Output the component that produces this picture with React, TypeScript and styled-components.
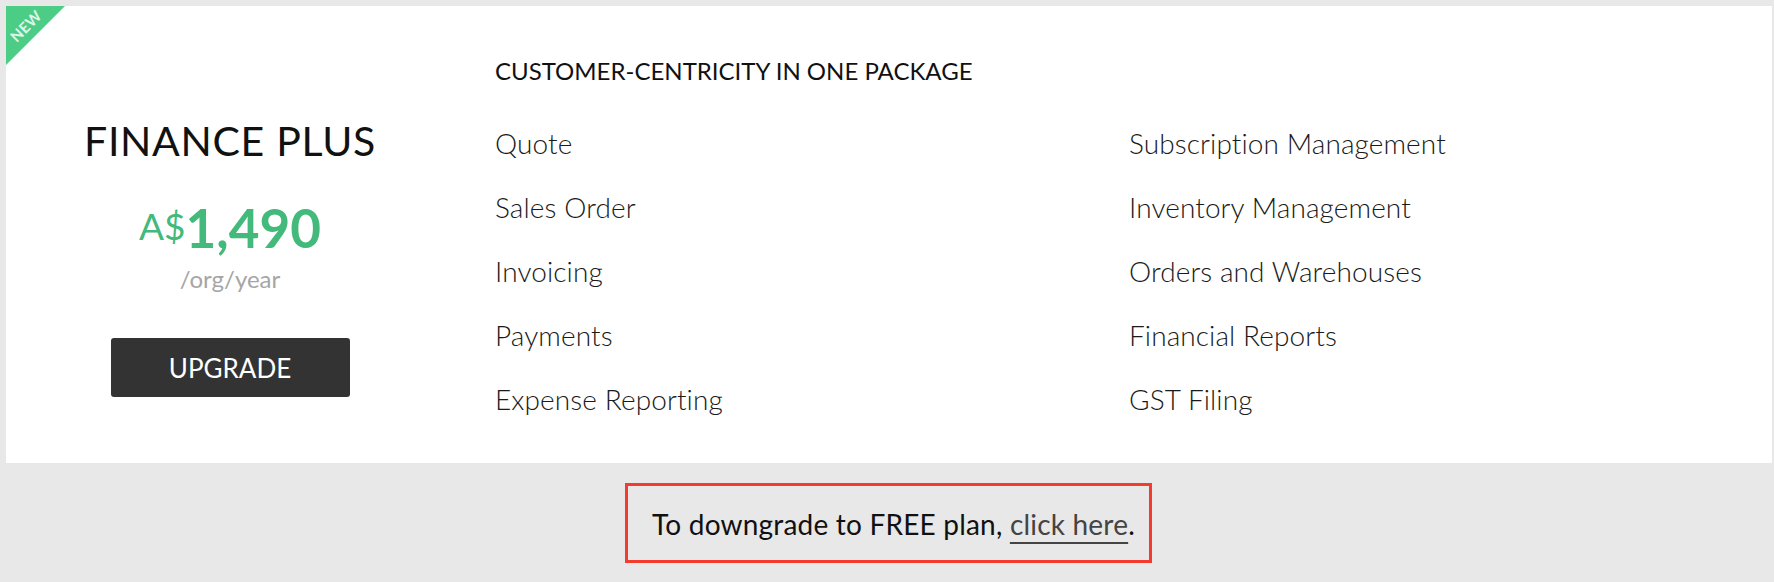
import styled, { createGlobalStyle } from "styled-components";

const GlobalStyle = createGlobalStyle`
  html, body {
    margin: 0;
    padding: 0;
    background: #e8e8e8;
  }
  body {
    font-family: Lato, "Noto Sans", sans-serif;
    color: #111;
  }
  * { box-sizing: border-box; }
`;

const leftFeatures = ["Quote", "Sales Order", "Invoicing", "Payments", "Expense Reporting"];
const rightFeatures = [
  "Subscription Management",
  "Inventory Management",
  "Orders and Warehouses",
  "Financial Reports",
  "GST Filing",
];

const App = () => {
  return (
    <>
      <GlobalStyle />
      <Page>
        <PlanCard>
          <Ribbon>
            <RibbonText>NEW</RibbonText>
          </Ribbon>
          <PlanSide>
            <PlanName>FINANCE PLUS</PlanName>
            <Price>
              <Currency>A$</Currency>
              <Amount>1,490</Amount>
            </Price>
            <Period>/org/year</Period>
            <UpgradeButton>UPGRADE</UpgradeButton>
          </PlanSide>
          <FeatureSide>
            <FeatureHeading>CUSTOMER-CENTRICITY IN ONE PACKAGE</FeatureHeading>
            <FeatureGrid>
              <FeatureColumn>
                {leftFeatures.map((f) => (
                  <Feature key={f}>{f}</Feature>
                ))}
              </FeatureColumn>
              <FeatureColumn>
                {rightFeatures.map((f) => (
                  <Feature key={f}>{f}</Feature>
                ))}
              </FeatureColumn>
            </FeatureGrid>
          </FeatureSide>
        </PlanCard>
        <Footer>
          <DowngradeNote>
            To downgrade to FREE plan, <DowngradeLink href="#">click here</DowngradeLink>.
          </DowngradeNote>
        </Footer>
      </Page>
    </>
  );
};

const Page = styled.div`
  width: 1774px;
  height: 582px;
  padding: 6px 2px 0 6px;
  overflow: hidden;
`;

const PlanCard = styled.div`
  position: relative;
  display: flex;
  height: 457px;
  background: #fff;
`;

const Ribbon = styled.div`
  position: absolute;
  top: 0;
  left: 0;
  width: 59px;
  height: 59px;
  background: #4ccd86;
  clip-path: polygon(0 0, 100% 0, 0 100%);
`;

const RibbonText = styled.span`
  position: absolute;
  top: 20px;
  left: 20px;
  transform: translate(-50%, -50%) rotate(-45deg);
  color: #fff;
  font-size: 15px;
  font-weight: 700;
  line-height: 1;
  letter-spacing: 0.3px;
  opacity: 0.82;
`;

const PlanSide = styled.div`
  width: 448px;
  flex-shrink: 0;
  display: flex;
  flex-direction: column;
  align-items: center;
  padding-top: 111px;
`;

const PlanName = styled.h2`
  margin: 0;
  font-size: 41px;
  font-weight: 400;
  line-height: 48px;
  color: #111;
  letter-spacing: 0.7px;
`;

const Price = styled.div`
  margin-top: 35px;
  display: flex;
  align-items: baseline;
  line-height: 56px;
  color: #43b97b;
`;

const Currency = styled.span`
  font-size: 37px;
  font-weight: 400;
  position: relative;
  top: -8px;
`;

const Amount = styled.span`
  font-size: 53px;
  font-weight: 700;
`;

const Period = styled.div`
  margin-top: 3px;
  font-size: 24px;
  line-height: 28px;
  color: #a6a6a6;
`;

const UpgradeButton = styled.button`
  margin-top: 45px;
  width: 239px;
  height: 59px;
  border: none;
  border-radius: 3px;
  background: #333;
  color: #fff;
  font-family: Lato, "Noto Sans", sans-serif;
  font-size: 26px;
  font-weight: 400;
  cursor: pointer;
`;

const FeatureSide = styled.div`
  flex: 1;
  padding: 50px 0 0 41px;
`;

const FeatureHeading = styled.h3`
  margin: 0;
  font-size: 24px;
  font-weight: 400;
  line-height: 30px;
  color: #111;
`;

const FeatureGrid = styled.div`
  margin-top: 25px;
  display: grid;
  grid-template-columns: 634px 1fr;
`;

const FeatureColumn = styled.ul`
  margin: 0;
  padding: 0;
  list-style: none;
`;

const Feature = styled.li`
  font-size: 28px;
  font-weight: 300;
  line-height: 64px;
  height: 64px;
  letter-spacing: 0.1px;
  color: #1a1a1a;
`;

const Footer = styled.div`
  padding: 20px 0 0 619px;
`;

const DowngradeNote = styled.div`
  display: inline-block;
  width: 527px;
  height: 80px;
  border: 3px solid #f33b30;
  padding: 21px 0 0 24px;
  font-size: 28px;
  line-height: 34px;
  letter-spacing: 0.2px;
  color: #111;
  white-space: nowrap;
`;

const DowngradeLink = styled.a`
  color: #444;
  text-decoration: underline;
  text-decoration-thickness: 2px;
  text-underline-offset: 7px;
`;

export default App;
